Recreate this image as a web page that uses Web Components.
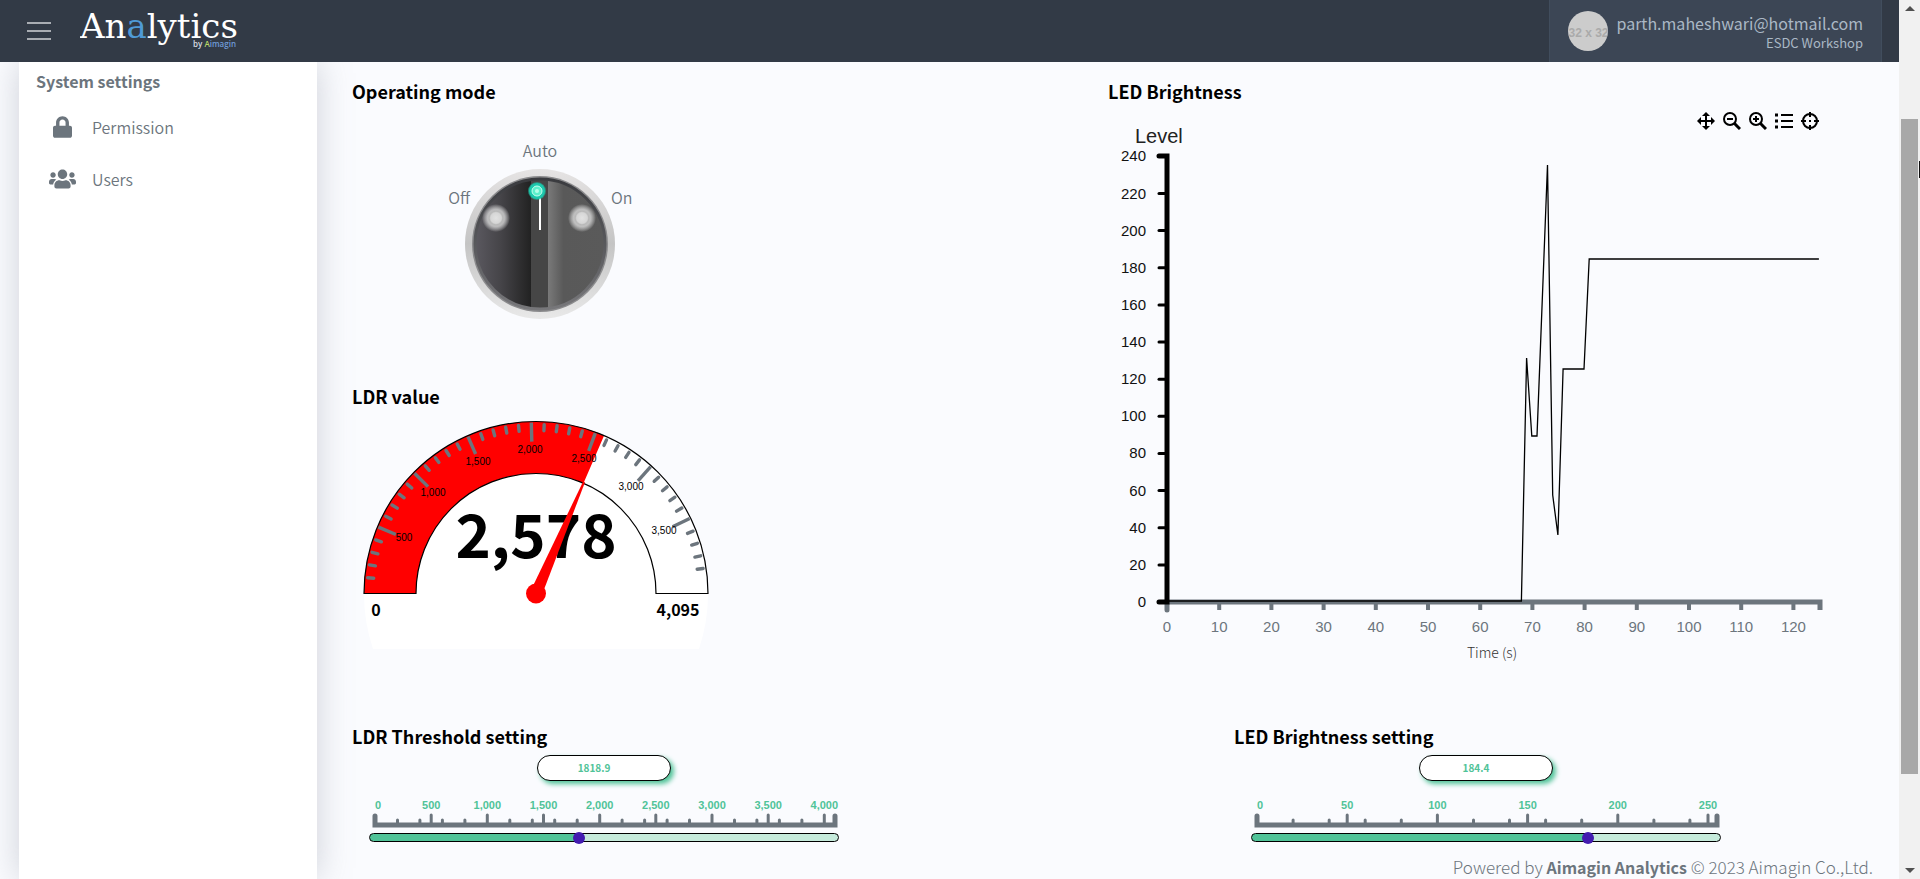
<!DOCTYPE html>
<html lang="en">
<head>
<meta charset="utf-8">
<title>Analytics</title>
<style>
  body { margin: 0; height: 100vh; overflow: hidden; background: #fafbfe; }
</style>
</head>
<body>
<analytics-app>
  <app-header slot="header"></app-header>
  <side-menu slot="menu"></side-menu>
  <mode-panel slot="left"></mode-panel>
  <ldr-gauge slot="left" value="2578" max="4095"></ldr-gauge>
  <line-chart slot="chart"></line-chart>
  <level-slider slot="ldr" heading="LDR Threshold setting" value="1818.9" max="4095" major="500" minor="200"></level-slider>
  <level-slider slot="led" heading="LED Brightness setting" value="184.4" max="255" major="50" minor="20"></level-slider>
</analytics-app>

<script>
const SANS = '"Noto Sans CJK SC", "Noto Sans", sans-serif';
const ARIAL = '"Liberation Sans", Arial, sans-serif';
const RESET = '*{box-sizing:border-box;margin:0;padding:0} svg{display:block}';
const HEADING = `h2{font:600 18px/22px ${SANS};color:#000;padding-bottom:2px}`;

function define(name, render) {
  customElements.define(name, class extends HTMLElement {
    connectedCallback() {
      if (this.shadowRoot) return;
      this.attachShadow({ mode: 'open' }).innerHTML = render(this);
    }
  });
}

/* Page frame */
define('analytics-app', () => `
<style>${RESET}
  :host { display: grid; grid-template-columns: minmax(0,1fr) 21px; height: 100vh; font: 300 16px/24px ${SANS}; color: #6c757d; background: #fafbfe; }
  .page { display: grid; grid-template-rows: auto minmax(0,1fr); min-width: 0; height: 100vh; }
  ::slotted([slot=header]) { z-index: 1; }
  .body { display: grid; grid-template-columns: 298px minmax(0,1fr); padding-left: 19px; overflow: hidden; }
  main { padding: 18px 35px 0; min-width: 0; z-index: 1; }
  .grid { display: grid; grid-template-columns: repeat(12, minmax(0,1fr)); }
  .left, .chart { grid-column: span 6; }
  .ldr { grid-column: span 7; }
  .led { grid-column: span 5; }
  footer { margin: 13px -9px 0 0; text-align: right; font-weight: 300; font-size: 17px; }
  b { font-weight: 700; font-size: 16px; }
</style>
<div class="page">
  <slot name="header"></slot>
  <div class="body">
    <slot name="menu"></slot>
    <main>
      <div class="grid">
        <div class="left"><slot name="left"></slot></div>
        <div class="chart"><slot name="chart"></slot></div>
        <div class="ldr"><slot name="ldr"></slot></div>
        <div class="led"><slot name="led"></slot></div>
      </div>
      <footer>Powered by <b>Aimagin Analytics</b> © 2023 Aimagin Co.,Ltd.</footer>
    </main>
  </div>
</div>
<page-scroll></page-scroll>`);

/* Scroll rail */
define('page-scroll', () => `
<style>${RESET}
  :host { display: flex; flex-direction: column; align-items: stretch; background: #f1f1f1; position: relative; }
  .end { height: 17px; display: grid; place-items: center; }
  .track { flex: 1; display: flex; flex-direction: column; padding: 0 2px; }
  .before { flex: 102; } .thumb { flex: 655; background: #a8a8a8; } .after { flex: 88; }
  .cursor { position: absolute; right: 0; top: 161px; width: 1px; height: 17px; background: #111; }
</style>
<div class="end"><svg width="10" height="5"><path d="M0 5 5 0l5 5z" fill="#505050"/></svg></div>
<div class="track"><div class="before"></div><div class="thumb"></div><div class="after"></div></div>
<div class="end"><svg width="10" height="5"><path d="M0 0h10L5 5z" fill="#505050"/></svg></div>
<div class="cursor"></div>`);

/* Top bar */
define('app-header', () => `
<style>${RESET}
  :host { display: flex; align-items: stretch; height: 62px; padding: 0 17px 0 27px; background: #323a46; }
  .menu { width: 24px; border: 0; background: none; display: grid; align-content: center; gap: 6px; }
  .menu i { height: 2px; background: #a9adb3; }
  .logo { margin-left: 29px; width: 160px; color: #fff; text-decoration: none; }
  .user { margin-left: auto; display: flex; align-items: center; gap: 8px; padding: 0 18px; background: #3c4655; border: 1px solid #414d5d; border-top: 0; border-bottom: 0; color: #aab8c5; }
  .avatar { width: 40px; height: 40px; border-radius: 50%; background: #ccc; color: #aaa; font: 700 12px/44px ${ARIAL}; display: flex; justify-content: center; overflow: hidden; white-space: nowrap; }
  .who { text-align: right; padding-top: 4px; }
  .mail { font: 400 16px/20px ${SANS}; }
  .org { font: 400 13px/20px ${SANS}; }
</style>
<button class="menu" aria-label="Toggle menu"><i></i><i></i><i></i></button>
<a class="logo" href="#" aria-label="Analytics by Aimagin">
  <svg width="160" height="62">
    <text x="0" y="38" font-family="DejaVu Serif, serif" font-size="34" fill="#fff">An<tspan fill="#4f9ad6">a</tspan>lytics</text>
    <text x="156" y="47" text-anchor="end" font-family="Open Sans, sans-serif" font-size="8" font-weight="600" fill="#d8dce2">by <tspan fill="#b9d765">A</tspan><tspan fill="#6f9bd8">imagin</tspan></text>
  </svg>
</a>
<div class="user">
  <div class="avatar">32 x 32</div>
  <div class="who"><div class="mail">parth.maheshwari@hotmail.com</div><div class="org">ESDC Workshop</div></div>
</div>`);

/* Side menu */
define('side-menu', () => `
<style>${RESET}
  :host { display: block; background: #fff; padding: 7px 0 0 17px; box-shadow: 0 0 32px rgba(130,136,150,.36); }
  h3 { font: 700 16px/24px ${SANS}; color: #6c757d; margin-bottom: 8px; }
  a { display: flex; align-items: center; height: 52px; color: #6c757d; text-decoration: none; font: 350 16px/24px ${SANS}; }
  .ico { width: 52px; margin-right: 4px; display: grid; place-items: center; fill: #6c757d; }
</style>
<h3>System settings</h3>
<nav>
<a href="#permission"><span class="ico"><svg width="19" height="22" viewBox="0 0 448 512"><path d="M400 224h-24v-72C376 68.200 307.800 0 224 0S72 68.200 72 152v72H48c-26.500 0-48 21.500-48 48v192c0 26.500 21.500 48 48 48h352c26.500 0 48-21.500 48-48V272c0-26.500-21.500-48-48-48zm-104 0H152v-72c0-39.700 32.300-72 72-72s72 32.300 72 72v72z"/></svg></span>Permission</a>
<a href="#users"><span class="ico"><svg width="27" height="22" viewBox="0 0 640 512"><path d="M96 224c35.300 0 64-28.700 64-64s-28.700-64-64-64-64 28.700-64 64 28.700 64 64 64zm448 0c35.300 0 64-28.700 64-64s-28.700-64-64-64-64 28.700-64 64 28.700 64 64 64zm32 32h-64c-17.600 0-33.500 7.100-45.100 18.600 40.300 22.100 68.900 62 75.100 109.400h66c17.700 0 32-14.300 32-32v-32c0-35.300-28.700-64-64-64zm-256 0c61.900 0 112-50.100 112-112S381.900 32 320 32 208 82.100 208 144s50.100 112 112 112zm76.800 32h-8.300c-20.800 10-43.900 16-68.500 16s-47.600-6-68.500-16h-8.300C179.600 288 128 339.600 128 403.200V432c0 26.500 21.500 48 48 48h288c26.500 0 48-21.500 48-48v-28.800c0-63.600-51.600-115.200-115.200-115.200zm-223.700-13.400C161.500 263.100 145.600 256 128 256H64c-35.300 0-64 28.700-64 64v32c0 17.700 14.300 32 32 32h65.900c6.300-47.400 34.900-87.300 75.200-109.400z"/></svg></span>Users</a>
</nav>`);

/* Operating mode selector: three radios placed round a knob */
define('mode-panel', () => `
<style>${RESET}${HEADING}
  :host { display: block; padding-bottom: 66px; }
  fieldset { border: 0; position: relative; width: 150px; height: 150px; margin: 65px 0 0 113px; font: 350 16px/24px ${SANS}; color: #6c757d; }
  label { position: absolute; white-space: nowrap; }
  input { position: absolute; opacity: 0; }
  .auto { bottom: 157px; left: 0; right: 0; text-align: center; }
  .off { top: 16px; right: 145px; }
  .on { top: 16px; left: 146px; }
</style>
<h2>Operating mode</h2>
<fieldset aria-label="Operating mode">
  <svg width="150" height="150">
    <defs>
      <linearGradient id="ring" x2="0" y2="1"><stop offset="0" stop-color="#e6e4e4"/><stop offset=".5" stop-color="#c4c4c4"/><stop offset="1" stop-color="#e9e9e9"/></linearGradient>
      <linearGradient id="face" gradientUnits="userSpaceOnUse" x1="10" x2="140" y1="0" y2="0"><stop offset="0" stop-color="#5b5960"/><stop offset=".2" stop-color="#454448"/><stop offset=".43" stop-color="#222"/><stop offset=".43" stop-color="#464646"/><stop offset=".56" stop-color="#464646"/><stop offset=".56" stop-color="#7a7a7a"/><stop offset=".68" stop-color="#595959"/><stop offset="1" stop-color="#5a5a5a"/></linearGradient>
      <radialGradient id="glow"><stop offset="0" stop-color="#e2e2e2"/><stop offset=".38" stop-color="#d6d6d6"/><stop offset=".48" stop-color="#b8b8b8"/><stop offset=".62" stop-color="#e0e0e0" stop-opacity=".75"/><stop offset="1" stop-color="#fff" stop-opacity="0"/></radialGradient>
      <linearGradient id="rim" x2="0" y2="1"><stop offset="0" stop-color="#3a3b3f"/><stop offset="1" stop-color="#77777a"/></linearGradient>
    </defs>
    <circle cx="75" cy="75" r="75" fill="url(#ring)"/>
    <circle cx="75" cy="75" r="68" fill="#8b8b8d"/>
    <circle cx="75" cy="75" r="65" fill="url(#face)" stroke="url(#rim)" stroke-width="3"/>
    <circle cx="31" cy="49" r="14" fill="url(#glow)"/><circle cx="117" cy="49" r="14" fill="url(#glow)"/>
    <path d="M75 27v34" stroke="#fff" stroke-width="2"/>
    <circle cx="72" cy="22" r="9" fill="#1fb9a0" opacity=".6"/><circle cx="72" cy="22" r="8" fill="#1cc8ac"/><circle cx="72" cy="22" r="5" fill="#5cf0cc" stroke="#c9fff0"/><circle cx="72" cy="22" r="2" fill="#b5ffea"/>
  </svg>
  <label class="off"><input type="radio" name="mode">Off</label>
  <label class="auto"><input type="radio" name="mode" checked>Auto</label>
  <label class="on"><input type="radio" name="mode">On</label>
</fieldset>`);

/* Half-circle gauge */
define('ldr-gauge', (el) => {
  const value = +el.getAttribute('value'), max = +el.getAttribute('max');
  const cx = 184, cy = 184.5, R = 172, r = 120;
  const at = (deg, rad) => {
    const a = Math.PI * (1 - deg / 180);
    return (cx + rad * Math.cos(a)).toFixed(1) + ' ' + (cy - rad * Math.sin(a)).toFixed(1);
  };
  let ticks = '';
  for (let v = 100; v < 4000; v += 100) {
    const deg = 1 + v * 179 / max, major = v % 500 === 0;
    ticks += `<path d="M${at(deg, major ? R - 1 : 169)}L${at(deg, major ? 152 : 163)}" ${major ? '' : 'stroke-linecap="round"'}/>`;
  }
  const labels = [[500, 52, 132], [1000, 81, 87], [1500, 126, 56], [2000, 178, 44], [2500, 232, 53], [3000, 279, 81], [3500, 312, 125]]
    .map(([v, x, y]) => `<text x="${x}" y="${y}">${v.toLocaleString('en-US')}</text>`).join('');
  const deg = value / max * 180;
  return `
<style>${RESET}${HEADING} :host { display: block; padding-bottom: 76px; } svg { max-width: 100%; }</style>
<h2>LDR value</h2>
<svg width="372" height="240" viewBox="0 0 372 240" role="img" aria-label="LDR value gauge">
  <path d="M${cx - R} ${cy}A${R} ${R} 0 0 1 ${cx + R} ${cy}A${R} ${R} 0 0 1 347 240H21A${R} ${R} 0 0 1 ${cx - R} ${cy}Z" fill="#fff"/>
  <path d="M${at(0, R)}A${R} ${R} 0 0 1 ${at(deg, R)}L${at(deg, r)}A${r} ${r} 0 0 0 ${at(0, r)}Z" fill="#f00"/>
  <path d="M${at(0, R)}A${R} ${R} 0 0 1 ${at(180, R)}L${at(180, r)}A${r} ${r} 0 0 0 ${at(0, r)}Z" fill="none" stroke="#000" stroke-width="1.2"/>
  <g stroke="#6c757d" stroke-width="3.4">${ticks}</g>
  <g font-family="Liberation Sans, Arial, sans-serif" font-size="10" text-anchor="middle">${labels}</g>
  <g font-family="Noto Sans CJK SC, sans-serif" font-weight="700" text-anchor="middle">
    <text x="184" y="149" font-size="60">${value.toLocaleString('en-US')}</text>
    <text x="24" y="207" font-size="16">0</text><text x="326" y="207" font-size="16">${max.toLocaleString('en-US')}</text>
  </g>
  <g fill="#f00"><path transform="rotate(${(deg - 90).toFixed(1)} ${cx} ${cy})" d="M178 184 183 63h2l5 121z"/><circle cx="${cx}" cy="${cy}" r="10"/></g>
</svg>`;
});

/* Time series */
define('line-chart', () => {
  const X = (t) => +(59 + t * 5.22).toFixed(1), Y = (v) => +(498 - v * 1.857).toFixed(1);
  let yAxis = '', yText = '', xAxis = '', xText = '';
  for (let v = 0; v <= 240; v += 20) {
    if (v && v < 240) yAxis += `<path d="M51 ${Y(v)}h8" stroke-width="3"/>`;
    yText += `<text x="38" y="${Math.round(Y(v)) + 5}">${v}</text>`;
  }
  for (let t = 0; t <= 120; t += 10) {
    if (t) xAxis += `<path d="M${X(t)} 500v6" stroke-width="4"/>`;
    xText += `<text x="${X(t)}" y="528">${t}</text>`;
  }
  const points = [[0, 497], [68, 497], [69, 254], [70, 332], [71, 332], [73, 61], [74, 391], [75, 431], [76, 265], [80, 265], [81, 155], [125, 155]]
    .map(([t, y]) => (X(t) - 0.6).toFixed(1) + ',' + y).join(' ');
  return `
<style>${RESET}${HEADING}
  :host { display: block; }
  .plot { display: grid; }
  .plot > * { grid-area: 1 / 1; }
  .canvas { width: 100%; height: auto; }
  .tools { justify-self: end; align-self: start; display: flex; gap: 8px; margin: 8px 45px 0 0; }
  button { width: 18px; height: 18px; border: 0; background: none; }
  .tools svg { fill: none; stroke: #000; stroke-width: 2; }
</style>
<h2>LED Brightness</h2>
<div class="plot">
  <svg class="canvas" viewBox="0 0 756 570" role="img" aria-label="LED brightness over time">
    <g font-family="Liberation Sans, Arial, sans-serif" font-size="15">
      <text x="27" y="39" font-size="20" fill="#222">Level</text>
      <g text-anchor="end" fill="#111">${yText}</g>
      <g text-anchor="middle" fill="#6c757d">${xText}</g>
    </g>
    <text x="384" y="554" text-anchor="middle" font-family="Noto Sans CJK SC, sans-serif" font-size="14" fill="#333">Time (s)</text>
    <g stroke="#6c757d" fill="none"><path d="M59 498H712v8" stroke-width="5"/><path d="M59 500v6" stroke-width="5" stroke-linecap="round"/>${xAxis}</g>
    <g stroke="#000" fill="none" stroke-linecap="round"><path d="M51 52H59V498H51" stroke-width="5"/>${yAxis}</g>
    <polyline points="${points}" fill="none" stroke="#000" stroke-width="1.3"/>
  </svg>
  <div class="tools">
    <button aria-label="Pan"><svg width="18" height="18"><path d="M9 3v12M3 9h12"/><path d="M9 0l4 4H5zM9 18l4-4H5zM0 9l4-4v8zM18 9l-4-4v8z" fill="#000" stroke="none"/></svg></button>
    <button aria-label="Zoom out"><svg width="18" height="18"><circle cx="7" cy="7" r="6"/><path d="M4 7h6"/><path d="M11 11l6 6" stroke-width="3"/></svg></button>
    <button aria-label="Zoom in"><svg width="18" height="18"><circle cx="7" cy="7" r="6"/><path d="M4 7h6M7 4v6"/><path d="M11 11l6 6" stroke-width="3"/></svg></button>
    <button aria-label="Legend"><svg width="18" height="18"><path d="M6 3h12M6 9h12M6 15h12"/><path d="M0 3h3M0 9h3M0 15h3" stroke-width="3"/></svg></button>
    <button aria-label="Crosshair"><svg width="18" height="18"><circle cx="9" cy="9" r="7"/><path d="M9 0v5M9 13v5M0 9h5M13 9h5M8 9h2"/></svg></button>
  </div>
</div>`;
});

/* Slider with a scale and a value box */
define('level-slider', (el) => {
  const get = (k) => el.getAttribute(k), max = +get('max'), value = +get('value'), major = +get('major'), minor = +get('minor');
  const X = (v) => +(6 + v * 460 / max).toFixed(1);
  let ticks = '', text = '';
  for (let v = minor; v < max; v += minor) if (v % major) ticks += `<path d="M${X(v)} 21v5" stroke-width="3"/>`;
  for (let v = 0; v <= max; v += major) {
    if (v) ticks += `<path d="M${X(v)} 16v10" stroke-width="3"/>`;
    text += `<text x="${v ? X(v) : 9}" y="10">${v.toLocaleString('en-US')}</text>`;
  }
  return `
<style>${RESET}${HEADING}
  :host { display: block; }
  .control { display: grid; width: 470px; max-width: 100%; margin: 6px 0 0 17px; }
  .value { justify-self: center; width: 134px; height: 26px; margin-bottom: 18px; padding: 0 20px 2px 0; border: 1px solid #000; border-radius: 13px; background: #fff; box-shadow: 3px 3px 5px #50c398; font: 700 10px/20px ${SANS}; color: #50c398; text-align: center; outline: 0; }
  svg { width: 100%; height: auto; overflow: visible; }
  input[type=range] { appearance: none; width: 100%; height: 9px; margin-top: 4px; border: 1px solid #000; border-radius: 5px; background: linear-gradient(90deg, #50c398 ${value / max * 100}%, #c5eadb 0); }
  input[type=range]::-webkit-slider-thumb { appearance: none; width: 12px; height: 12px; border-radius: 50%; background: #431bb0; }
</style>
<h2 id="t">${get('heading')}</h2>
<div class="control">
  <input class="value" type="text" value="${value}" aria-labelledby="t">
  <svg viewBox="0 0 470 30" aria-hidden="true">
    <g fill="#50c398" font-family="Liberation Sans, Arial, sans-serif" font-weight="700" font-size="11" text-anchor="middle">${text}</g>
    <g stroke="#6c757d" fill="none" stroke-linecap="round">${ticks}<path d="M6 17v9H466v-9" stroke-width="5"/></g>
  </svg>
  <input type="range" min="0" max="${max}" step="0.1" value="${value}" aria-labelledby="t">
</div>`;
});
</script>
</body>
</html>
